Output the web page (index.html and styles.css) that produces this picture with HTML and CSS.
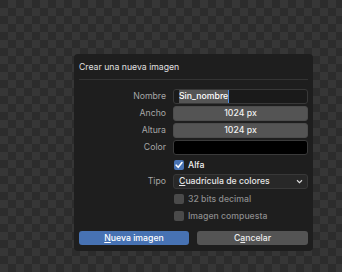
FILE: index.html
```html
<!DOCTYPE html>
<html lang="es">
<head>
<meta charset="utf-8">
<link rel="stylesheet" href="styles.css">
</head>
<body>
<div class="dialog">
  <div class="title">Crear una nueva imagen</div>
  <div class="sep"></div>
  <div class="form">
    <div class="label">Nombre</div>
    <div class="field text"><span class="sel">Sin_nombre</span><span class="caret"></span></div>
    <div class="label">Ancho</div>
    <div class="field num">1024 px</div>
    <div class="label">Altura</div>
    <div class="field num">1024 px</div>
    <div class="label">Color</div>
    <div class="field color"></div>
    <div class="label"></div>
    <div class="check on"><span class="box"><svg viewBox="0 0 10 10" width="10" height="10"><path d="M2.2 5.2 L4.2 7.3 L8 2.6" fill="none" stroke="#fff" stroke-width="1.6" stroke-linecap="round" stroke-linejoin="round"/></svg></span><span class="ctext">Alfa</span></div>
    <div class="label">Tipo</div>
    <div class="field drop"><span><u>C</u>uadrícula de colores</span><svg viewBox="0 0 8 6" width="7" height="5"><path d="M1 1.5 L4 4.5 L7 1.5" fill="none" stroke="#ddd" stroke-width="1.3"/></svg></div>
    <div class="label"></div>
    <div class="check off"><span class="box"></span><span class="ctext">32 bits decimal</span></div>
    <div class="label"></div>
    <div class="check off"><span class="box"></span><span class="ctext">Imagen compuesta</span></div>
  </div>
  <div class="buttons">
    <div class="btn primary"><u>N</u>ueva imagen</div>
    <div class="btn">C<u>a</u>ncelar</div>
  </div>
</div>
</body>
</html>
```
FILE: styles.css
```css
html, body {
  margin: 0;
  padding: 0;
}
body {
  width: 342px;
  height: 272px;
  overflow: hidden;
  background-color: #2c2c2c;
  background-image:
    linear-gradient(45deg, #363636 25%, transparent 25%, transparent 75%, #363636 75%),
    linear-gradient(45deg, #363636 25%, transparent 25%, transparent 75%, #363636 75%);
  background-size: 16px 16px;
  background-position: 0 0, 8px 8px;
  font-family: Inter, "Noto Sans", sans-serif;
  font-size: 8.7px;
  font-weight: 500;
  color: #e6e6e6;
  padding-top: 54px;
  padding-left: 74px;
  box-sizing: border-box;
}
.dialog {
  width: 239px;
  height: 197px;
  background: #1e1e1e;
  border-radius: 4px;
  box-sizing: border-box;
  padding: 0 5px;
  display: flex;
  flex-direction: column;
}
.title {
  height: 25px;
  line-height: 26px;
  color: #e0e0e0;
  font-weight: 400;
}
.sep {
  height: 1px;
  background: #333;
  margin-bottom: 9px;
}
.form {
  display: grid;
  grid-template-columns: 87px 135px;
  column-gap: 7px;
  grid-auto-rows: 15px;
  row-gap: 2px;
}
.label {
  text-align: right;
  color: #a6a6a6;
  line-height: 15px;
  font-weight: 400;
}
.field {
  border-radius: 3px;
  box-sizing: border-box;
  line-height: 13px;
  border: 1px solid #2a2a2a;
}
.text {
  background: #1a1a1a;
  border-color: #383838;
  padding-left: 5px;
  display: flex;
  align-items: center;
  color: #fff;
}
.sel {
  background: #555;
  line-height: 13px;
}
.caret {
  width: 1px;
  height: 13px;
  background: #4a8ce0;
}
.num {
  background: #545454;
  text-align: center;
  color: #f0f0f0;
  border-color: #4c4c4c;
}
.color {
  background: #000;
  border-color: #3a3a3a;
}
.drop {
  background: #282828;
  border-color: #383838;
  display: flex;
  align-items: center;
  justify-content: space-between;
  padding: 0 4px 0 5px;
  color: #e6e6e6;
}
.check {
  display: flex;
  align-items: center;
  gap: 4px;
  padding-left: 1px;
}
.box {
  width: 10px;
  height: 10px;
  border-radius: 2px;
  display: flex;
  align-items: center;
  justify-content: center;
}
.on .box {
  background: #4772b3;
}
.on .ctext {
  color: #f0f0f0;
}
.off .box {
  background: #4a4a4a;
}
.off .ctext {
  color: #8c8c8c;
}
.buttons {
  margin-top: 8px;
  display: grid;
  grid-template-columns: 110px 111px;
  column-gap: 8px;
}
.btn {
  height: 14px;
  line-height: 14px;
  text-align: center;
  border-radius: 3px;
  background: #545454;
  color: #ececec;
}
.btn.primary {
  background: #4772b3;
  color: #fff;
}
u {
  text-decoration-thickness: 1px;
  text-underline-offset: 1px;
}
```
